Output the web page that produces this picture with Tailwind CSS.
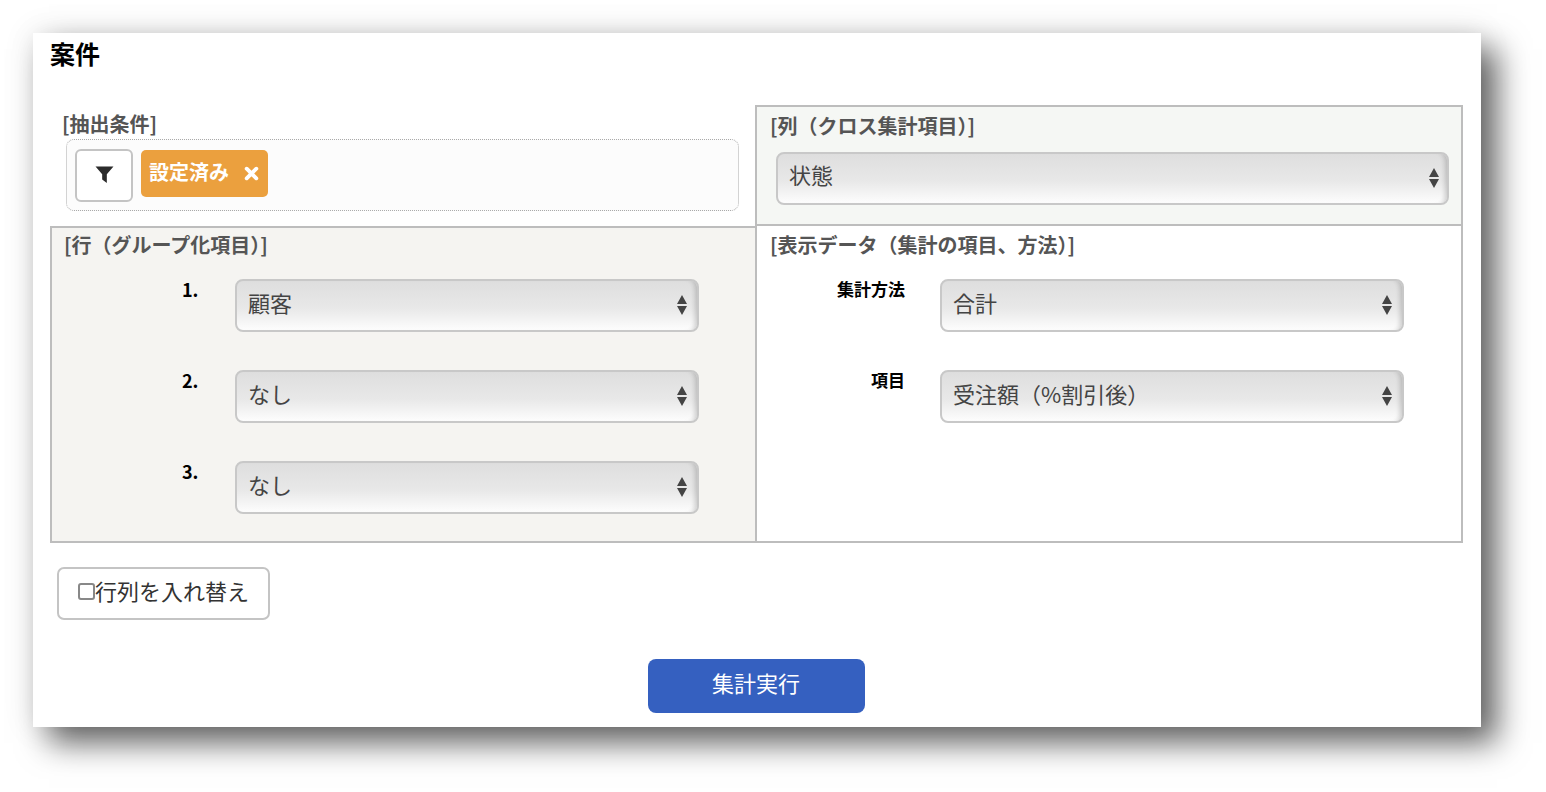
<!DOCTYPE html>
<html lang="ja">
<head>
<meta charset="UTF-8">
<title>案件</title>
<script src="https://cdn.jsdelivr.net/npm/@tailwindcss/browser@4"></script>
</head>
<body class="bg-white font-['Noto_Sans_CJK_JP','Noto_Sans',sans-serif] overflow-hidden">
<div class="w-[1546px] h-[792px] pt-[33px] pl-[33px]">
  <div class="w-[1448px] h-[694px] bg-white pt-[3px] pl-[17px] shadow-[16px_16px_30px_rgba(0,0,0,0.6),0_0_30px_rgba(0,0,0,0.1)]">
    <h2 class="h-[35px] text-[25px] leading-[34px] font-bold text-black">案件</h2>

    <div class="mt-[34px] w-[1413px] grid grid-cols-[705px_708px] grid-rows-[121px_317px]">
      <!-- filter -->
      <div class="pl-[12px] pt-[6px]">
        <div class="text-[20px] leading-[26px] font-bold text-[#555]">[抽出条件]</div>
        <div class="mt-[2px] ml-[4px] w-[673px] h-[72px] border border-dotted border-[#aaa] rounded-[8px] bg-[#fcfcfc] pl-[8px] pt-[9px] flex items-start gap-[8px]">
          <button class="w-[58px] h-[53px] bg-white border-2 border-[#c4c4c4] rounded-[6px] flex items-center justify-center pb-[3px]">
            <svg class="w-[19px] h-[19px]" viewBox="0 0 18 18"><path d="M0.5 1.5h17l-6.3 7.2v8.3l-4.4-3.2v-5.1z" fill="#2b2b2b"/></svg>
          </button>
          <div class="mt-[1px] w-[127px] h-[47px] bg-[#eba03e] rounded-[5px] pl-[8px] flex items-center gap-[15px] text-white font-bold">
            <span class="text-[20px] leading-[42px] pb-[4px] whitespace-nowrap">設定済み</span>
            <svg class="w-[15px] h-[15px]" viewBox="0 0 14 14"><path d="M2.5 2.5l9 9M11.5 2.5l-9 9" stroke="#fff" stroke-width="3.6" stroke-linecap="round"/></svg>
          </div>
        </div>
      </div>

      <!-- column -->
      <div class="border-2 border-[#bdbdbd] bg-[#f5f7f4] pl-[13px] pt-[6px]">
        <div class="text-[20px] leading-[26px] font-bold text-[#555]">[列（クロス集計項目）]</div>
        <div class="relative mt-[13px] ml-[6px] w-[673px]">
          <select class="appearance-none w-full h-[53px] rounded-[8px] border-2 border-[#c8c8c8] bg-linear-to-b from-[#dedede] via-[#e8e8e8] via-55% to-[#fdfdfd] pl-[11px] pb-[8px] text-[22px] text-[#444] shadow-[inset_-6px_0_5px_-4px_rgba(0,0,0,0.18)]"><option>状態</option></select>
          <svg class="absolute right-[9px] top-[15px] w-[12px] h-[22px]" viewBox="0 0 12 22"><path d="M6 1l5 9H1zM1 12h10l-5 9z" fill="#444"/></svg>
        </div>
      </div>

      <!-- rows -->
      <div class="border-2 border-r-0 border-[#bdbdbd] bg-[#f5f4f1] pl-[12px]">
        <div class="pt-[4px] text-[20px] leading-[26px] font-bold text-[#555]">[行（グループ化項目）]</div>
        <div class="mt-[21px] ml-[118px] grid grid-cols-[53px_464px] gap-y-[38px]">
          <div class="text-[18px] leading-[20px] font-bold text-black">1.</div>
          <div class="relative">
            <select class="appearance-none w-full h-[53px] rounded-[8px] border-2 border-[#c8c8c8] bg-linear-to-b from-[#dedede] via-[#e8e8e8] via-55% to-[#fdfdfd] pl-[11px] pb-[6px] text-[22px] text-[#444] shadow-[inset_-6px_0_5px_-4px_rgba(0,0,0,0.18)]"><option>顧客</option></select>
            <svg class="absolute right-[11px] top-[15px] w-[12px] h-[22px]" viewBox="0 0 12 22"><path d="M6 1l5 9H1zM1 12h10l-5 9z" fill="#444"/></svg>
          </div>
          <div class="text-[18px] leading-[20px] font-bold text-black">2.</div>
          <div class="relative">
            <select class="appearance-none w-full h-[53px] rounded-[8px] border-2 border-[#c8c8c8] bg-linear-to-b from-[#dedede] via-[#e8e8e8] via-55% to-[#fdfdfd] pl-[11px] pb-[6px] text-[22px] text-[#444] shadow-[inset_-6px_0_5px_-4px_rgba(0,0,0,0.18)]"><option>なし</option></select>
            <svg class="absolute right-[11px] top-[15px] w-[12px] h-[22px]" viewBox="0 0 12 22"><path d="M6 1l5 9H1zM1 12h10l-5 9z" fill="#444"/></svg>
          </div>
          <div class="text-[18px] leading-[20px] font-bold text-black">3.</div>
          <div class="relative">
            <select class="appearance-none w-full h-[53px] rounded-[8px] border-2 border-[#c8c8c8] bg-linear-to-b from-[#dedede] via-[#e8e8e8] via-55% to-[#fdfdfd] pl-[11px] pb-[6px] text-[22px] text-[#444] shadow-[inset_-6px_0_5px_-4px_rgba(0,0,0,0.18)]"><option>なし</option></select>
            <svg class="absolute right-[11px] top-[15px] w-[12px] h-[22px]" viewBox="0 0 12 22"><path d="M6 1l5 9H1zM1 12h10l-5 9z" fill="#444"/></svg>
          </div>
        </div>
      </div>

      <!-- data -->
      <div class="border-2 border-t-0 border-[#bdbdbd] pl-[13px] bg-white">
        <div class="pt-[6px] text-[20px] leading-[26px] font-bold text-[#555]">[表示データ（集計の項目、方法）]</div>
        <div class="mt-[21px] grid grid-cols-[135px_464px] gap-x-[35px] gap-y-[38px]">
          <div class="text-[17px] leading-[20px] font-bold text-black text-right">集計方法</div>
          <div class="relative">
            <select class="appearance-none w-full h-[53px] rounded-[8px] border-2 border-[#c8c8c8] bg-linear-to-b from-[#dedede] via-[#e8e8e8] via-55% to-[#fdfdfd] pl-[11px] pb-[6px] text-[22px] text-[#444] shadow-[inset_-6px_0_5px_-4px_rgba(0,0,0,0.18)]"><option>合計</option></select>
            <svg class="absolute right-[11px] top-[15px] w-[12px] h-[22px]" viewBox="0 0 12 22"><path d="M6 1l5 9H1zM1 12h10l-5 9z" fill="#444"/></svg>
          </div>
          <div class="text-[17px] leading-[20px] font-bold text-black text-right">項目</div>
          <div class="relative">
            <select class="appearance-none w-full h-[53px] rounded-[8px] border-2 border-[#c8c8c8] bg-linear-to-b from-[#dedede] via-[#e8e8e8] via-55% to-[#fdfdfd] pl-[11px] pb-[6px] text-[22px] text-[#444] shadow-[inset_-6px_0_5px_-4px_rgba(0,0,0,0.18)]"><option>受注額（%割引後）</option></select>
            <svg class="absolute right-[11px] top-[15px] w-[12px] h-[22px]" viewBox="0 0 12 22"><path d="M6 1l5 9H1zM1 12h10l-5 9z" fill="#444"/></svg>
          </div>
        </div>
      </div>
    </div>

    <label class="mt-[24px] ml-[7px] w-[213px] h-[53px] border-2 border-[#c4c4c4] rounded-[7px] bg-white flex items-center pl-[19px] text-[22px] text-[#333] pb-[7px]">
      <span class="w-[17px] h-[17px] mt-[3px] border-2 border-[#888] rounded-[3px] bg-white"></span>行列を入れ替え
    </label>

    <div class="mt-[39px] w-[1412px] flex justify-center">
      <button class="w-[217px] h-[54px] bg-[#3560c0] rounded-[8px] text-white text-[22px] pb-[7px]">集計実行</button>
    </div>
  </div>
</div>
</body>
</html>
